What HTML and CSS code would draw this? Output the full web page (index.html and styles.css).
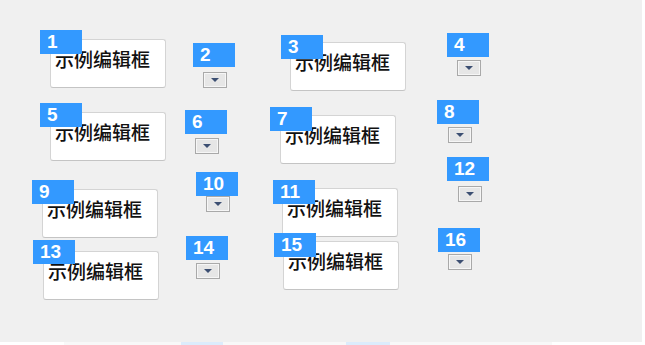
FILE: index.html
```html
<!DOCTYPE html>
<html lang="zh-CN">
  <head>
    <meta charset="UTF-8" />
    <title>控件编号</title>
    <link rel="stylesheet" href="styles.css">
  </head>

  <body>
    <div class="canvas" id="canvas"></div>
    <div class="strip">
      <div class="strip-bar"></div>
      <div class="strip-tab tab-a"></div>
      <div class="strip-tab tab-b"></div>
    </div>
    <script>
      // id, label x/y, kind, widget x/y
      const widgets = [
        [1, 40, 30, 'edit', 50, 39],
        [2, 193, 43, 'drop', 203, 72],
        [3, 281, 35, 'edit', 290, 42],
        [4, 447, 33, 'drop', 457, 60],
        [5, 40, 103, 'edit', 50, 112],
        [6, 185, 110, 'drop', 195, 138],
        [7, 270, 107, 'edit', 280, 115],
        [8, 437, 100, 'drop', 448, 127],
        [9, 32, 180, 'edit', 42, 189],
        [10, 196, 172, 'drop', 206, 196],
        [11, 273, 180, 'edit', 282, 188],
        [12, 447, 157, 'drop', 458, 186],
        [13, 33, 240, 'edit', 43, 251],
        [14, 186, 236, 'drop', 196, 263],
        [15, 274, 233, 'edit', 283, 241],
        [16, 438, 228, 'drop', 448, 254],
      ];

      const canvas = document.getElementById('canvas');
      const labels = [];

      widgets.forEach(([id, lx, ly, kind, wx, wy]) => {
        const w = document.createElement('div');
        if (kind === 'edit') {
          w.className = 'edit';
          w.textContent = '示例编辑框';
        } else {
          w.className = 'drop';
          w.innerHTML = '<span class="arrow"></span>';
        }
        w.style.left = wx + 'px';
        w.style.top = wy + 'px';
        canvas.appendChild(w);

        const l = document.createElement('div');
        l.className = 'tag';
        l.textContent = id;
        l.style.left = lx + 'px';
        l.style.top = ly + 'px';
        labels.push(l);
      });

      // numbers sit above every control
      labels.forEach(l => canvas.appendChild(l));
    </script>
  </body>
</html>
```

FILE: styles.css
```css
body {
  margin: 0;
  background: #fff;
  width: 645px;
  height: 345px;
  overflow: hidden;
}

.canvas {
  position: relative;
  width: 642px;
  height: 342px;
  background: #f0f0f0;
}

.edit {
  position: absolute;
  box-sizing: border-box;
  width: 116px;
  height: 49px;
  padding: 5px 0 0 4px;
  background: #fff;
  border: 1px solid #d4d4d4;
  border-bottom-color: #c4c4c4;
  border-radius: 3px;
  font-family: "Noto Sans CJK SC", sans-serif;
  font-weight: 500;
  font-size: 19px;
  line-height: 27px;
  color: #111;
  white-space: nowrap;
}

.drop {
  position: absolute;
  box-sizing: border-box;
  width: 24px;
  height: 16px;
  border: 1px solid #a9a9a9;
  background: #e6e6e6;
  box-shadow: inset 0 0 0 1px #f6f6f6;
  display: flex;
  align-items: center;
  justify-content: center;
}

.arrow {
  width: 0;
  height: 0;
  border-left: 4px solid transparent;
  border-right: 4px solid transparent;
  border-top: 4px solid #3c4f72;
}

.tag {
  position: absolute;
  box-sizing: border-box;
  width: 42px;
  height: 24px;
  padding-left: 7px;
  background: #3399ff;
  color: #fff;
  font-family: "Liberation Sans", Arial, sans-serif;
  font-weight: bold;
  font-size: 19px;
  line-height: 24px;
}

.strip {
  display: flex;
  height: 3px;
  position: relative;
}

.strip-bar {
  margin-left: 64px;
  width: 488px;
  background: #f8f8f8;
}

.strip-tab {
  position: absolute;
  top: 0;
  height: 3px;
  background: #dcecfc;
}

.tab-a {
  left: 181px;
  width: 42px;
}

.tab-b {
  left: 346px;
  width: 44px;
}
```
